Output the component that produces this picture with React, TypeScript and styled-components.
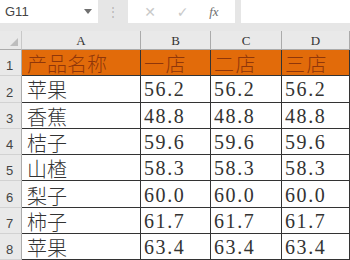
import React from 'react';
import styled, { createGlobalStyle } from 'styled-components';

const GlobalStyle = createGlobalStyle`
    html, body {
        margin: 0;
        padding: 0;
        background: #e6e6e6;
        overflow: hidden;
    }
`;

const Window = styled.div`
    width: 350px;
    height: 260px;
    background: #e6e6e6;
    overflow: hidden;
    font-family: "Liberation Sans", Arial, sans-serif;
`;

const FormulaBar = styled.div`
    display: flex;
    height: 23px;
    align-items: stretch;
`;

const NameBox = styled.div`
    width: 98px;
    background: #fff;
    display: flex;
    align-items: center;
    justify-content: space-between;
    padding: 0 6px 0 5px;
    box-sizing: border-box;
    font-size: 13px;
    color: #444;
`;

const Grip = styled.div`
    width: 30px;
    display: flex;
    align-items: center;
    justify-content: center;
    color: #b5b5b5;
    font-size: 12px;
`;

const ButtonBox = styled.div`
    width: 107px;
    background: #fff;
    display: flex;
    align-items: center;
    justify-content: space-around;
    padding: 0 6px;
    box-sizing: border-box;
`;

const BarButton = styled.span<{ $dark?: boolean }>`
    font-size: ${(props) => (props.$dark ? '13px' : '14px')};
    color: ${(props) => (props.$dark ? '#6e6e6e' : '#c9c9c9')};
    font-family: ${(props) => (props.$dark ? '"Liberation Serif", serif' : '"DejaVu Sans", sans-serif')};
    font-style: ${(props) => (props.$dark ? 'italic' : 'normal')};
`;

const FormulaInput = styled.div`
    flex: 1;
    margin-left: 6px;
    background: #fff;
`;

const Sheet = styled.div`
    margin-top: 8px;
    display: grid;
    grid-template-columns: 22px 119px 70px 71px 68px;
    grid-template-rows: 19px repeat(8, 26.3px);
`;

const Corner = styled.div`
    background: #e9e9e9;
    border-right: 1px solid #c8c8c8;
    border-bottom: 1px solid #ababab;
    box-sizing: border-box;
    display: flex;
    align-items: flex-end;
    justify-content: flex-end;
    padding: 0 3px 3px 0;
`;

const ColHeader = styled.div`
    background: #e9e9e9;
    border-right: 1px solid #ababab;
    border-bottom: 1px solid #ababab;
    box-sizing: border-box;
    display: flex;
    align-items: center;
    justify-content: center;
    font-family: "Liberation Serif", serif;
    font-size: 13px;
    color: #333;
    padding-top: 1px;
`;

const RowHeader = styled.div`
    background: #e9e9e9;
    border-right: 1px solid #ababab;
    border-bottom: 1px solid #d2d2d2;
    box-sizing: border-box;
    display: flex;
    align-items: flex-end;
    padding: 0 0 2px 6px;
    font-size: 13px;
    color: #444;
`;

const Cell = styled.div<{ $head?: boolean }>`
    background: ${(props) => (props.$head ? '#e26b0a' : '#fff')};
    color: ${(props) => (props.$head ? '#8f360a' : '#333')};
    border-right: 1px solid #333;
    border-bottom: 1px solid #333;
    box-sizing: border-box;
    display: flex;
    align-items: center;
    padding: 2px 0 0 3px;
    font-family: "Liberation Serif", "Noto Sans CJK SC", serif;
    font-size: 20px;
    font-weight: 300;
    letter-spacing: 1.6px;
    white-space: nowrap;
    overflow: hidden;
`;

const NameCell = styled(Cell)`
    padding-left: 5px;
    letter-spacing: 0;
`;

const columns = ['A', 'B', 'C', 'D'];

const rows = [
    ['苹果', '56.2'],
    ['香蕉', '48.8'],
    ['桔子', '59.6'],
    ['山楂', '58.3'],
    ['梨子', '60.0'],
    ['柿子', '61.7'],
    ['苹果', '63.4'],
];

const App: React.FC = () => {
    return (
        <Window>
            <GlobalStyle />
            <FormulaBar>
                <NameBox>
                    <span>G11</span>
                    <svg width="8" height="5" viewBox="0 0 8 5">
                        <path d="M0 0 L8 0 L4 5 Z" fill="#707070" />
                    </svg>
                </NameBox>
                <Grip>⋮</Grip>
                <ButtonBox>
                    <BarButton>✕</BarButton>
                    <BarButton>✓</BarButton>
                    <BarButton $dark>fx</BarButton>
                </ButtonBox>
                <FormulaInput />
            </FormulaBar>
            <Sheet>
                <Corner>
                    <svg width="8" height="8" viewBox="0 0 8 8">
                        <path d="M8 0 L8 8 L0 8 Z" fill="#bdbdbd" />
                    </svg>
                </Corner>
                {columns.map((c) => (
                    <ColHeader key={c}>{c}</ColHeader>
                ))}

                <RowHeader>1</RowHeader>
                <NameCell $head>产品名称</NameCell>
                <Cell $head>一店</Cell>
                <Cell $head>二店</Cell>
                <Cell $head>三店</Cell>

                {rows.map((r, i) => (
                    <React.Fragment key={i}>
                        <RowHeader>{i + 2}</RowHeader>
                        <NameCell>{r[0]}</NameCell>
                        <Cell>{r[1]}</Cell>
                        <Cell>{r[1]}</Cell>
                        <Cell>{r[1]}</Cell>
                    </React.Fragment>
                ))}
            </Sheet>
        </Window>
    );
};

export default App;
